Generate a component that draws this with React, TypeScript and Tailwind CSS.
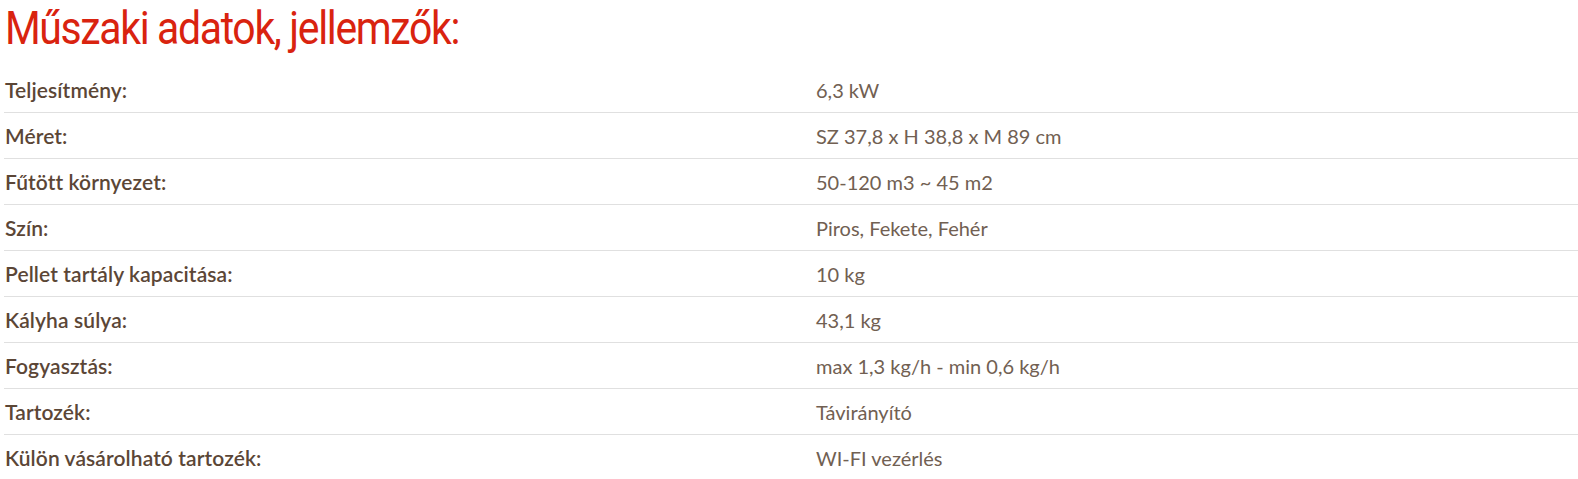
import React from "react";

const rows: [string, string][] = [
  ["Teljesítmény:", "6,3 kW"],
  ["Méret:", "SZ 37,8 x H 38,8 x M 89 cm"],
  ["Fűtött környezet:", "50-120 m3 ~ 45 m2"],
  ["Szín:", "Piros, Fekete, Fehér"],
  ["Pellet tartály kapacitása:", "10 kg"],
  ["Kályha súlya:", "43,1 kg"],
  ["Fogyasztás:", "max 1,3 kg/h - min 0,6 kg/h"],
  ["Tartozék:", "Távirányító"],
  ["Külön vásárolható tartozék:", "WI-FI vezérlés"],
];

export default function App() {
  return (
    <div className="w-[1578px] h-[479px] overflow-hidden bg-white pl-[4px]">
      <h2 className="text-[46px] leading-[56px] text-[#d9230f] font-normal pl-[1px] tracking-[-1.5px] origin-left scale-x-[0.89]" style={{ fontFamily: '"Liberation Sans Narrow", Roboto, sans-serif' }}>
        Műszaki adatok, jellemzők:
      </h2>
      <div className="mt-[11px]" style={{ fontFamily: 'Lato, sans-serif' }}>
        {rows.map(([k, v]) => (
          <div key={k} className="grid grid-cols-[812px_1fr] h-[46px] items-center border-b border-[#e0e0e0]">
            <div className="pl-[1px] text-[21px] font-semibold tracking-[0.1px] text-[#5b4636]">{k}</div>
            <div className="text-[20px] font-normal text-[#716052]">{v}</div>
          </div>
        ))}
      </div>
    </div>
  );
}
